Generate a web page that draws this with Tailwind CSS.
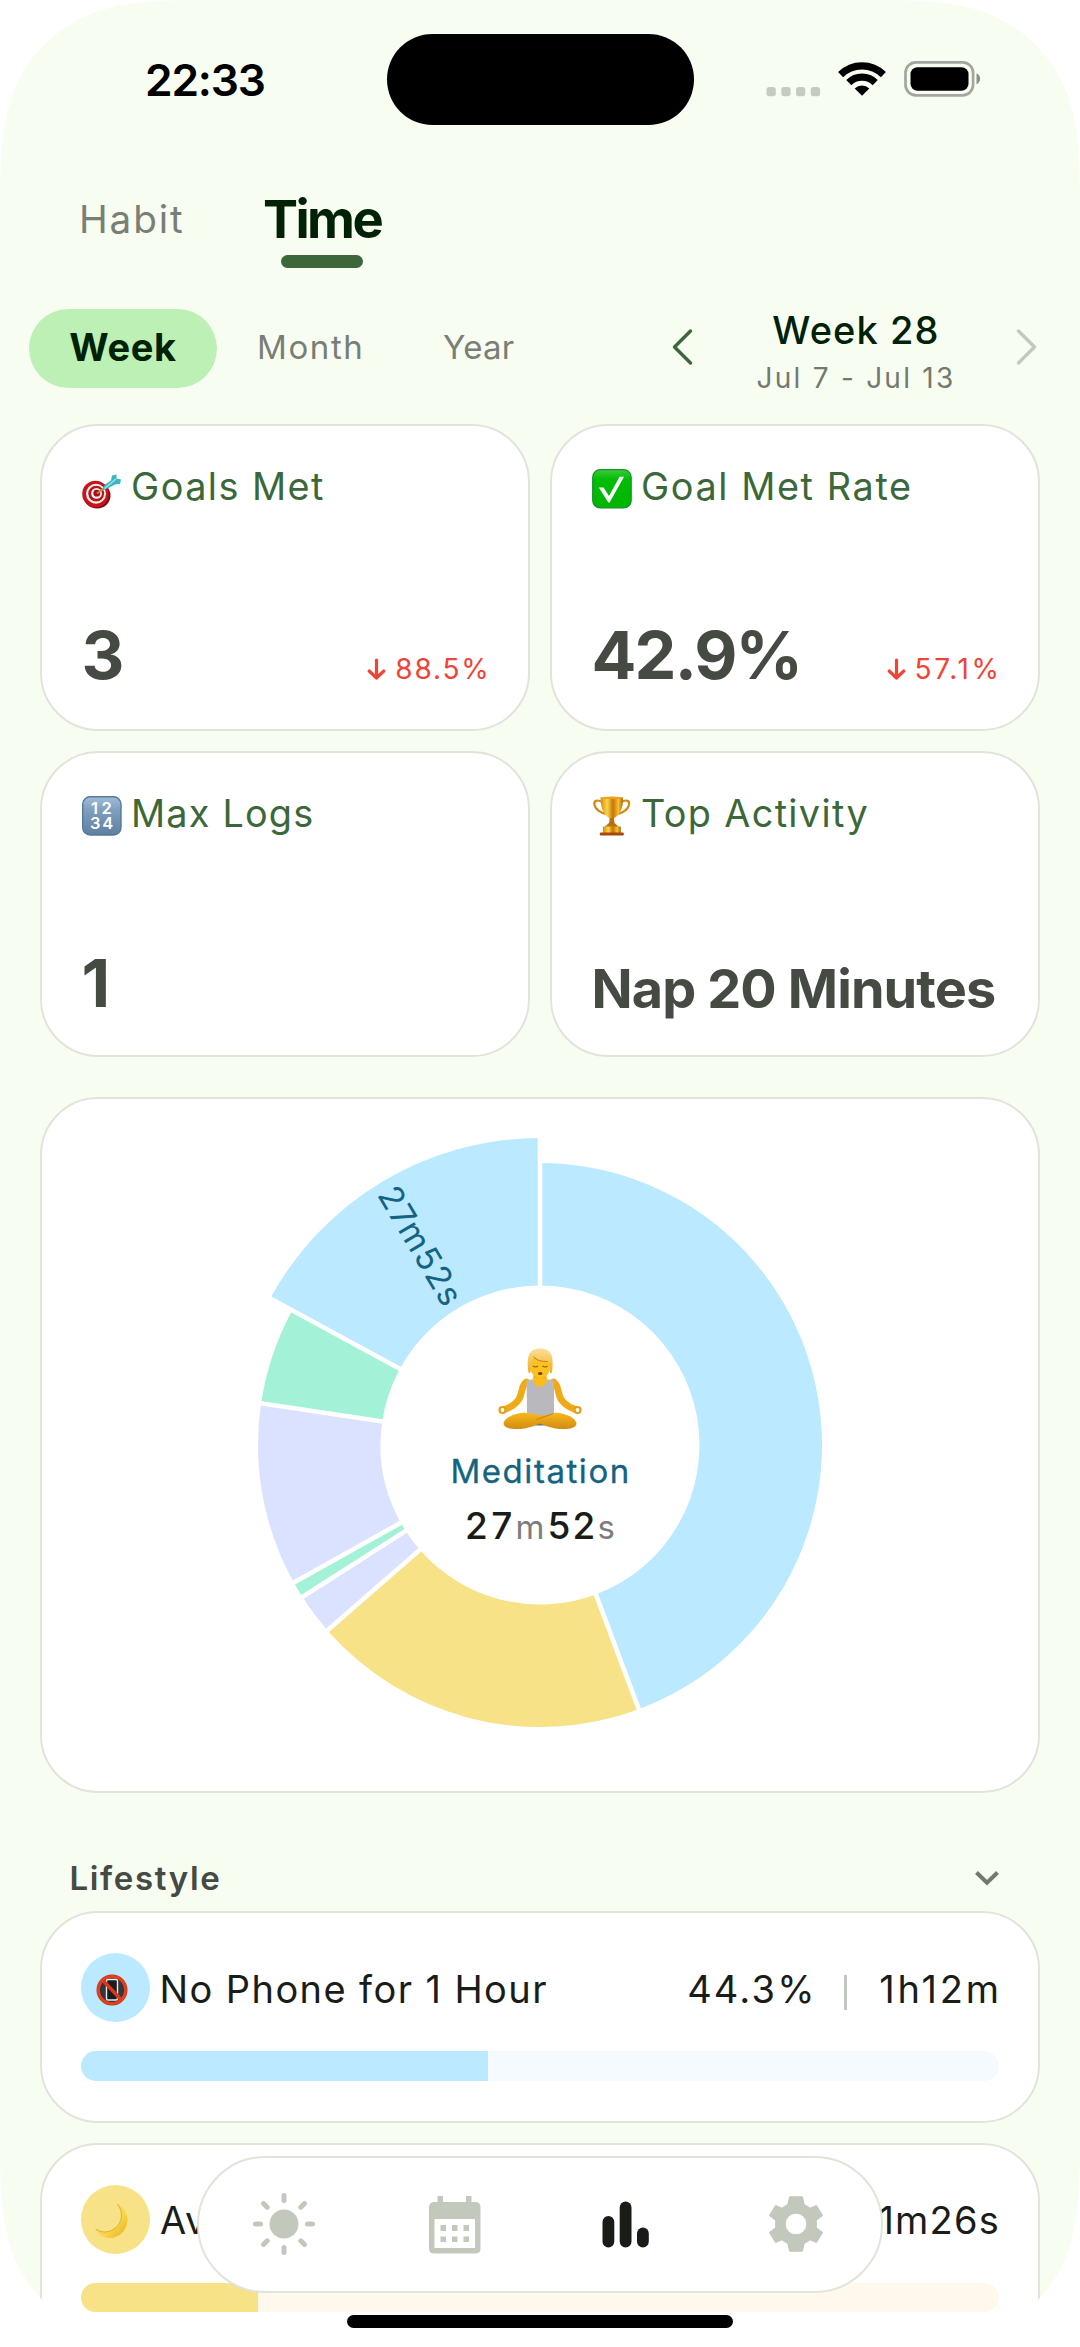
<!DOCTYPE html>
<html lang="en">
<head>
<meta charset="utf-8">
<title>Habit statistics</title>
<script src="https://cdn.jsdelivr.net/npm/@tailwindcss/browser@4"></script>
</head>
<body class="bg-white">
<div class="relative w-[1080px] h-[2347px] overflow-hidden bg-[#f8fdf1] font-[Inter,sans-serif] whitespace-nowrap">

  <!-- Status bar -->
  <div class="flex items-center h-[159px] pl-[145px]">
    <div class="w-[242px] text-[44.3px] leading-[48px] font-semibold tracking-[-1.2px] text-black">22:33</div>
    <div class="w-[307px] h-[91px] rounded-full bg-black"></div>
    <svg class="ml-[56px] w-[260px] h-[80px]" viewBox="0 0 260 80">
      <g fill="#c6cbbf"><rect x="16.5" y="47" width="9.3" height="9.3" rx="2.8"/><rect x="31.3" y="47" width="9.3" height="9.3" rx="2.8"/><rect x="46" y="47" width="9.3" height="9.3" rx="2.8"/><rect x="60.8" y="47" width="9.3" height="9.3" rx="2.8"/></g>
      <g fill="none" stroke="#000" stroke-width="7.2"><path d="M90.6 34.6A30.4 30.4 0 0 1 133.4 34.6"/><path d="M98.8 42.6A18.8 18.8 0 0 1 125.2 42.6"/></g>
      <path d="M112 55.7L104.7 48.4A10.9 10.9 0 0 1 119.3 48.4Z"/>
      <rect x="155.500" y="22.3" width="67.6" height="33" rx="10.5" fill="none" stroke="#a3a69e" stroke-width="2.7"/>
      <rect x="160.500" y="27.2" width="58" height="23.6" rx="7"/>
      <path d="M226.500 33.5C231.300 35 231.300 42.500 226.500 44.200Z" fill="#8e918b"/>
    </svg>
  </div>

  <!-- Top tabs -->
  <div class="flex items-start pt-6 pl-[79px] leading-[72px] h-[109px]">
    <div class="w-[184px] text-[38.7px] tracking-[1.85px] text-[#7a7f75]">Habit</div>
    <div class="flex flex-col items-center">
      <div class="text-[52.500px] font-bold tracking-[-2.600px] text-[#002204]">Time</div>
      <div class="w-[82px] h-[13px] rounded-full bg-[#3c6839]"></div>
    </div>
  </div>

  <!-- Period selector -->
  <div class="mt-[41px] flex items-center h-[76px] pl-[29px]">
    <div class="self-start flex shrink-0 items-center justify-center w-[188px] h-[79px] pb-[3px] rounded-full bg-[#bcf0b4] text-[38px] font-bold tracking-[0.6px] text-[#002204]">Week</div>
    <div class="ml-[40px] w-[186px] shrink-0 text-[33px] leading-[40px] tracking-[1.6px] text-[#7a7f75]">Month</div>
    <div class="w-[227px] shrink-0 text-[33px] leading-[40px] tracking-[0.3px] text-[#7a7f75]">Year</div>
    <svg class="w-6 h-10 shrink-0" viewBox="0 0 24 40" fill="none" stroke="#3c6839" stroke-width="3.4" stroke-linecap="round" stroke-linejoin="round"><path d="M20.500 4L4.500 20L20.500 36"/></svg>
    <div class="ml-[51px] w-[222px] shrink-0 self-start pt-px flex flex-col items-center gap-[8px] leading-[40px]">
      <div class="text-[38px] font-[450] tracking-[1.1px] text-[#002204]">Week 28</div>
      <div class="text-[28px] tracking-[2.25px] text-[#73796e]">Jul 7 - Jul 13</div>
    </div>
    <svg class="ml-[47px] w-6 h-10 shrink-0" viewBox="0 0 24 40" fill="none" stroke="#c3c8bc" stroke-width="3.4" stroke-linecap="round" stroke-linejoin="round"><path d="M4.500 4L20.500 20L4.500 36"/></svg>
  </div>

  <div class="px-10 pt-[39px]">
    <!-- Summary cards -->
    <div class="grid grid-cols-2 grid-rows-2 gap-5 h-[633px]">
      <div class="flex flex-col justify-between rounded-[58px] border-[2.5px] border-[#e1e4da] bg-white pt-10 px-[39.5px] pb-[49.500px]">
        <div class="flex items-start gap-[9.500px] text-[37.8px] leading-10 tracking-[1.46px] text-[#3c6839]">
          <svg class="w-10 h-10 mt-[3px]" viewBox="0 0 40 40">
            <ellipse cx="15" cy="26.500" rx="13.500" ry="13" fill="#7d0a10"/>
            <circle cx="13.500" cy="25" r="13.300" fill="#c8141c"/>
            <circle cx="14" cy="24.800" r="10" fill="#f4f1f0"/><circle cx="14.200" cy="24.600" r="7.900" fill="#b8141b"/>
            <circle cx="14.500" cy="24.400" r="5.400" fill="#f4f1f0"/><circle cx="14.800" cy="24.200" r="3.400" fill="#a80f17"/>
            <path d="M15 24.500L23 18.500" stroke="#c99238" stroke-width="1.600"/>
            <path d="M20 21.500L23 15.500L29 11.500L30 6.500L34.500 5.500L34.500 9.500L39 10.500L38 15L33 15.500L26.500 19Z" fill="#39b7c4"/>
            <path d="M22.500 19.500L34 10" stroke="#9be3e6" stroke-width="1.600"/>
          </svg>
          <div>Goals Met</div>
        </div>
        <div class="flex items-end justify-between">
          <div class="text-[66.500px] leading-[48px] font-bold text-[#454a42]">3</div>
          <div class="flex items-center gap-[9px] -mb-px -mr-[2px] text-[28px] leading-5 tracking-[1.8px] text-[#f04438]">
            <svg class="w-[19px] h-[22px]" viewBox="0 0 19 22" fill="none" stroke="#f04438" stroke-width="3.200" stroke-linecap="round" stroke-linejoin="round"><path d="M9.500 2V20M2.200 13L9.500 20L16.800 13"/></svg>
            <div>88.5%</div>
          </div>
        </div>
      </div>

      <div class="flex flex-col justify-between rounded-[58px] border-[2.5px] border-[#e1e4da] bg-white pt-10 px-[39.5px] pb-[49.500px]">
        <div class="flex items-start gap-[9.500px] text-[37.8px] leading-10 tracking-[1.6px] text-[#3c6839]">
          <svg class="w-10 h-10 mt-[3px]" viewBox="0 0 40 40">
            <defs><linearGradient id="ck" x1="0" y1="0" x2="0" y2="1"><stop offset="0" stop-color="#3fc93f"/><stop offset=".25" stop-color="#00be05"/><stop offset="1" stop-color="#00b400"/></linearGradient></defs>
            <rect x=".7" y=".7" width="38.500" height="38.200" rx="7.500" fill="url(#ck)" stroke="#12932b" stroke-width="1.200"/>
            <path d="M6.800 18.500H11.500L17 27L27.500 7.800H32L17.600 33.500H16.300Z" fill="#fff"/>
          </svg>
          <div>Goal Met Rate</div>
        </div>
        <div class="flex items-end justify-between">
          <div class="text-[66.500px] leading-[48px] font-bold tracking-[-1.85px] text-[#454a42]">42.9%</div>
          <div class="flex items-center gap-[9px] -mb-px -mr-[2px] text-[28px] leading-5 tracking-[2.6px] text-[#f04438]">
            <svg class="w-[19px] h-[22px]" viewBox="0 0 19 22" fill="none" stroke="#f04438" stroke-width="3.200" stroke-linecap="round" stroke-linejoin="round"><path d="M9.500 2V20M2.200 13L9.500 20L16.800 13"/></svg>
            <div class="-mr-px">57.1%</div>
          </div>
        </div>
      </div>

      <div class="flex flex-col justify-between rounded-[58px] border-[2.5px] border-[#e1e4da] bg-white pt-10 px-[39.5px] pb-[48px]">
        <div class="flex items-start gap-[9.500px] text-[37.8px] leading-10 tracking-[1.2px] text-[#3c6839]">
          <svg class="w-10 h-10 mt-[3px]" viewBox="0 0 40 40">
            <defs><linearGradient id="nm" x1="0" y1="0" x2="0" y2="1"><stop offset="0" stop-color="#9fbdd8"/><stop offset=".35" stop-color="#7f9fc0"/><stop offset="1" stop-color="#5f7f9f"/></linearGradient></defs>
            <rect x=".7" y=".7" width="38.300" height="38.300" rx="7.500" fill="url(#nm)" stroke="#56789a" stroke-width="1.400"/>
            <g fill="#fff" font-size="16.500" font-weight="600" letter-spacing="1.800"><text x="9" y="18.300" letter-spacing="3.500">12</text><text x="8" y="33">34</text></g>
          </svg>
          <div>Max Logs</div>
        </div>
        <div class="text-[66.500px] leading-[48px] font-bold text-[#454a42]">1</div>
      </div>

      <div class="flex flex-col justify-between rounded-[58px] border-[2.5px] border-[#e1e4da] bg-white pt-10 px-[39.5px] pb-[46px]">
        <div class="flex items-start gap-[9.500px] text-[37.8px] leading-10 tracking-[1.35px] text-[#3c6839]">
          <svg class="w-10 h-10 mt-[3px]" viewBox="0 0 40 40">
            <defs><linearGradient id="tr" x1="0" x2="1" y1="0" y2="0"><stop offset="0" stop-color="#d98a0d"/><stop offset=".3" stop-color="#fbd54a"/><stop offset=".55" stop-color="#c87408"/><stop offset=".8" stop-color="#f7c030"/><stop offset="1" stop-color="#a9650a"/></linearGradient></defs>
            <g fill="none" stroke="#cf8a14" stroke-width="2.200"><path d="M10 6C5 3 1.500 5 2.500 9C3.500 13 8 17 14.500 18"/><path d="M29.500 6C34.500 3 38 5 37 9C36 13 31.500 17 25 18"/></g>
            <path d="M8.500 1.500H31C31 10 29.500 18.500 21.500 22.500H18C10.500 18.500 8.500 10 8.500 1.500Z" fill="url(#tr)"/>
            <ellipse cx="19.800" cy="1.800" rx="11.300" ry="1.300" fill="#e9a41c"/>
            <path d="M17.800 22H21.800L22.500 27L27 31H12.500L17 27Z" fill="#b8700c"/>
            <rect x="11" y="30.500" width="17.800" height="7" fill="url(#tr)"/><rect x="7.800" y="36.500" width="24" height="3" rx="1" fill="#a8480c"/>
          </svg>
          <div>Top Activity</div>
        </div>
        <div class="text-[54px] leading-[40px] font-bold tracking-[-0.9px] text-[#454a42]">Nap 20 Minutes</div>
      </div>
    </div>

    <!-- Time distribution -->
    <div class="mt-10 h-[696px] rounded-[58px] border-[2.5px] border-[#e1e4da] bg-white">
      <svg class="block w-[995px] h-[691px]" viewBox="-498 -346 995 691">
        <defs>
          <linearGradient id="hair" x1="0" y1="0" x2="0" y2="1"><stop offset="0" stop-color="#fbe09a"/><stop offset="1" stop-color="#f0ac1a"/></linearGradient>
          <linearGradient id="leg" x1="0" y1="0" x2="0" y2="1"><stop offset="0" stop-color="#f9b91c"/><stop offset="1" stop-color="#d18a10"/></linearGradient>
        </defs>
        <g id="slices"></g>
        <g id="gaps" stroke="#fff" stroke-width="4.600"></g>
        <text transform="translate(-119 -199) rotate(59.500)" text-anchor="middle" y="12" font-size="33.500" letter-spacing="1.300" fill="#146380">27m52s</text>

        <!-- Person in lotus position -->
        <g transform="translate(-41.500 -96.500)">
          <path d="M28 33.500C22 37 24.500 46 19.500 52C15 58 10 60 4 61.500" fill="none" stroke="#efaa18" stroke-width="6.800" stroke-linecap="round"/>
          <path d="M55 33.500C61 37 58.500 46 63.500 52C68 58 73 60 79 61.500" fill="none" stroke="#efaa18" stroke-width="6.800" stroke-linecap="round"/>
          <circle cx="4" cy="61.500" r="3" fill="#fff" stroke="#e59f16" stroke-width="2.200"/><circle cx="79" cy="61.500" r="3" fill="#fff" stroke="#e59f16" stroke-width="2.200"/>
          <path d="M35 24H48V34H35Z" fill="#eda915"/>
          <path d="M28 32.500Q34 30 35 32Q41.500 43 48 32Q50 30 55.500 32.500V64Q56 72 53 72H31Q28 72 28.500 64Z" fill="#b9b9bd"/>
          <path d="M34 29H49L48.500 33Q41.500 44 34.500 33Z" fill="#fbbd1c"/>
          <path d="M36 68H48V77H36Z" fill="#6d747b"/>
          <path d="M26 64C14 65 5 70 5 75.500C6 81.500 22 82 34 78L46 73L30 65Z" fill="url(#leg)"/>
          <path d="M57 64C69 65 78 70 78 75.500C77 81.500 61 82 49 78L34 72L24 65.500C32 61 42 72 57 64Z" fill="url(#leg)"/>
          <path d="M38 71L55 65" stroke="#c98510" stroke-width="1.300"/>
          <ellipse cx="41.700" cy="16.500" rx="10.600" ry="13" fill="#fcc023"/>
          <path d="M30 24C28 10 29 0 42 0C54 0 55.500 10 53.500 24C52.500 25 51.500 25 51.500 23C52 16 51 13.500 49 13C43 13 38 11.500 35.500 8C35.500 11.500 32.500 13 32 23C32 25 31 25 30 24Z" fill="url(#hair)"/>
          <path d="M35 8C38 12 43 13 49 13" fill="none" stroke="#c07d14" stroke-width="1"/>
          <path d="M34.500 17.500Q37 19.500 39.500 17.500M44 17.500Q46.500 19.500 49 17.500" fill="none" stroke="#8a5a12" stroke-width="1.200"/>
          <ellipse cx="41.700" cy="25" rx="2.300" ry="1.500" fill="#7a3f0c"/>
        </g>
        <text x=".6" y="37.500" text-anchor="middle" font-size="33" letter-spacing="1.550" fill="#146380" stroke="#146380" stroke-width=".3">Meditation</text>
        <g font-size="37" font-weight="450" fill="#1a1c18"><text x="-75" y="93.500" letter-spacing="3.500">27</text><text x="7.500" y="93.500" letter-spacing="2.200">52</text></g>
        <g font-size="33" fill="#7d7d7d"><text x="-24.500" y="93.500">m</text><text x="57.500" y="93.500">s</text></g>
      </svg>
    </div>

    <!-- Category list -->
    <div class="mt-[61px] flex items-center justify-between h-12 pl-[29.500px] pr-[39px]">
      <div class="text-[33px] leading-[48px] font-semibold tracking-[1.65px] text-[#454a42]">Lifestyle</div>
      <svg class="w-[28px] h-[20px]" viewBox="0 0 28 20" fill="none" stroke="#73796e" stroke-width="4"><path d="M3.500 4.500L14 14.800L24.500 4.500"/></svg>
    </div>

    <div class="mt-[9px] flex flex-col gap-5">
      <div class="h-[211.500px] shrink-0 rounded-[58px] border-[2.5px] border-[#e1e4da] bg-white px-[39px] pt-[40px] text-[38px] leading-[69px] text-[#1a1c18]">
        <div class="flex items-center h-[69px]">
          <div class="flex items-center w-[69px] h-[69px] rounded-full bg-[#bbe9ff]">
            <svg class="ml-[14.500px] mt-1 w-8 h-8" viewBox="0 0 32 32">
              <circle cx="16" cy="16" r="15.500" fill="#c23318"/><circle cx="16" cy="16" r="12" fill="#33363a"/>
              <rect x="10.500" y="5.500" width="11" height="20.500" rx="1.500" fill="#1b1c20" stroke="#e9edf0" stroke-width="1.400"/>
              <path d="M6.500 6L25.500 26" stroke="#d8391c" stroke-width="3.600"/>
              <circle cx="16" cy="16" r="13.600" fill="none" stroke="#e2401d" stroke-width="2.800"/>
            </svg>
          </div>
          <div class="ml-[9.500px] mt-[3px] tracking-[1.41px]">No Phone for 1 Hour</div>
          <div class="ml-auto mt-[3px] tracking-[2.2px]">44.3%</div>
          <div class="ml-[27px] mt-[9px] w-[3.500px] h-[35px] bg-[#c3c8bc]"></div>
          <div class="ml-[32px] mt-[3px] -mr-[3px] tracking-[2.9px]">1h12m</div>
        </div>
        <div class="mt-[29px] h-[29.500px] rounded-full overflow-hidden bg-[#f5fafe]"><div class="h-full bg-[#bbe9ff]" style="width:44.3%"></div></div>
      </div>

      <div class="h-[211.500px] shrink-0 rounded-[58px] border-[2.5px] border-[#e1e4da] bg-white px-[39px] pt-[40px] text-[38px] leading-[69px] text-[#1a1c18]">
        <div class="flex items-center h-[69px]">
          <div class="flex items-center w-[69px] h-[69px] rounded-full bg-[#f7e287]">
            <svg class="ml-[14px] mt-1 w-[34px] h-[36px]" viewBox="0 0 34 36">
              <defs><linearGradient id="mn" x1="0" y1="0" x2="1" y2="1"><stop offset="0" stop-color="#f9e05e"/><stop offset=".6" stop-color="#f8d64a"/><stop offset="1" stop-color="#e5ae1c"/></linearGradient></defs>
              <path d="M22.500 1C30 5 34 13 32 21C29.500 31 20 36.500 11 34.500C6 33.500 2 30 .7 26C6 30 13 30 19 26C28 20 28.500 9 22.500 1Z" fill="url(#mn)"/>
              <path d="M22.500 1C28.500 9 28 20 19 26C13 30 6 30 .7 26" fill="none" stroke="#d9aa2e" stroke-width=".9"/>
            </svg>
          </div>
          <div class="ml-[10px] mt-[3px] tracking-[1.41px]">Av</div>
          <div class="ml-auto mt-[3px] -mr-px tracking-[1.2px]">31m26s</div>
        </div>
        <div class="mt-[29px] h-[29.500px] rounded-full overflow-hidden bg-[#fff8ec]"><div class="h-full bg-[#f7e287]" style="width:19.3%"></div></div>
      </div>
    </div>
  </div>

  <!-- Screen corners -->
  <svg class="absolute inset-0 w-[1080px] h-[2347px]" viewBox="0 0 1080 2347" fill="#fff">
    <defs><path id="c" d="M0 0H1.52866C1.08849 0 .86841 0 .66993 .06549L.63149 .07491C.37282 .16906 .16906 .37282 .07491 .63149L.06549 .66993C0 .86841 0 1.08849 0 1.52866Z"/></defs>
    <use href="#c" transform="scale(153)"/>
    <use href="#c" transform="translate(1080 0) scale(-153 153)"/>
    <use href="#c" transform="translate(0 2347) scale(153 -153)"/>
    <use href="#c" transform="translate(1080 2347) scale(-153 -153)"/>
  </svg>

  <!-- Floating navigation -->
  <div class="absolute left-[197px] top-[2155.500px] flex items-center w-[686px] h-[137px] rounded-full border-[2.5px] border-[#e1e4da] bg-white">
    <svg class="ml-[50.500px] w-[68px] h-[68px]" viewBox="-34 -34 68 68" fill="#c3c8bc">
      <circle r="14.500"/>
      <g stroke="#c3c8bc" stroke-width="5" stroke-linecap="round"><path d="M0-28.500V-23.500M0 23.500V28.500M-28.500 0H-23.500M23.500 0H28.500M-20.500-20.500L-16.800-16.800M20.500-20.500L16.800-16.800M-20.500 20.500L-16.800 16.800M20.500 20.500L16.800 16.800"/></g>
    </svg>
    <svg class="ml-[107px] w-[66px] h-[68px]" viewBox="0 0 66 68" fill="#c3c8bc">
      <path fill-rule="evenodd" d="M12.500 6H18V12H41V6H46.500V12H50Q55.500 12 55.500 17.500V58.500Q55.500 63.500 50 63.500H9.500Q4 63.500 4 58.500V17.500Q4 12 9.500 12H12.500ZM9.500 29V58H50V29Z"/>
      <path d="M15.500 35H21V41H15.500ZM27 35H32.500V41H27ZM38.500 35H44V41H38.500ZM15.500 46.500H21V52H15.500ZM27 46.500H32.500V52H27ZM38.500 46.500H44V52H38.500Z"/>
    </svg>
    <svg class="ml-[103px] w-[66px] h-[68px]" viewBox="0 0 66 68" fill="#1a1c18">
      <rect x="8.500" y="26" width="11.800" height="31.500" rx="5.900"/><rect x="25.700" y="11.500" width="11.800" height="46" rx="5.900"/><rect x="43" y="37.500" width="11.800" height="20" rx="5.900"/>
    </svg>
    <svg class="ml-[102px] w-[68px] h-[68px]" viewBox="-34 -34 68 68" fill="#c3c8bc">
      <path fill-rule="evenodd" stroke="#c3c8bc" stroke-width="1" stroke-linejoin="round" d="M-6.300-27.200H6.300L8.300-19.300Q11.500-18 14-15.800L20.500-18.600L26.600-8.400L20.200-3.600Q20.800 0 20.200 3.600L26.600 8.400L20.500 18.600L14 15.800Q11.500 18 8.300 19.300L6.300 27.200H-6.300L-8.300 19.300Q-11.500 18-14 15.800L-20.500 18.600L-26.600 8.400L-20.200 3.600Q-20.800 0-20.200-3.600L-26.600-8.400L-20.500-18.600L-14-15.800Q-11.500-18-8.300-19.300ZM0-10.800A10.800 10.800 0 1 0 0 10.800A10.800 10.800 0 1 0 0-10.800Z"/>
    </svg>
  </div>

  <!-- Home indicator -->
  <div class="absolute left-[347px] top-[2315px] w-[386px] h-[12.500px] rounded-full bg-black"></div>
</div>

<script>
  // Donut slices: [start angle, end angle, colour, outer radius], clockwise from the top
  const slices = [
    [0, 159.5, '#bbe9ff', 282],
    [159.5, 228.9, '#f7e287', 282],
    [228.9, 237.4, '#dae2ff', 282],
    [237.4, 240.8, '#a3f2d8', 282],
    [240.8, 278.5, '#dae2ff', 282],
    [278.5, 298.5, '#a3f2d8', 282],
    [298.5, 360, '#bbe9ff', 307]
  ];
  const inner = 159.5;
  const at = (angle, r) => {
    const t = angle * Math.PI / 180;
    return (Math.sin(t) * r).toFixed(2) + ' ' + (-Math.cos(t) * r).toFixed(2);
  };
  document.getElementById('slices').innerHTML = slices.map(([a, b, color, r]) =>
    `<path fill="${color}" d="M${at(a, r)}A${r} ${r} 0 0 1 ${at(b, r)}L${at(b, inner)}A${inner} ${inner} 0 0 0 ${at(a, inner)}Z"/>`).join('');
  document.getElementById('gaps').innerHTML = slices.map(([a]) =>
    `<path d="M${at(a, inner - 2)}L${at(a, 310)}"/>`).join('');
</script>
</body>
</html>
